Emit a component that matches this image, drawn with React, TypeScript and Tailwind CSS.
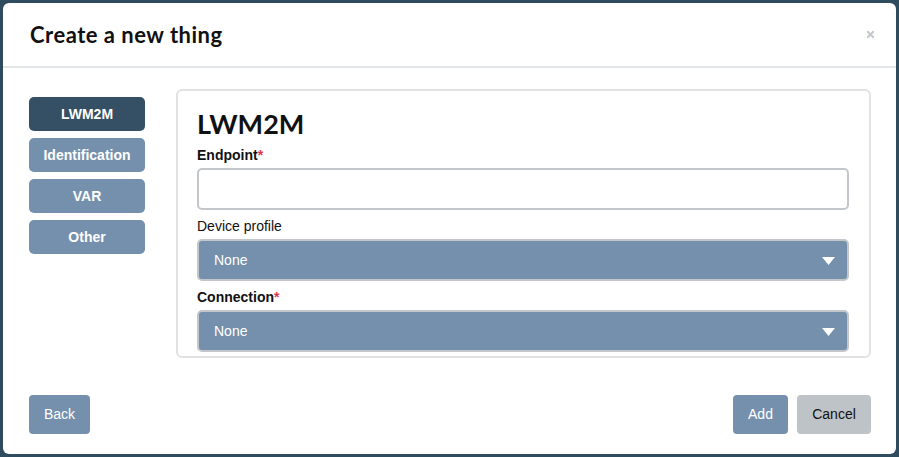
import { X } from 'lucide-react';

const tabs = ['LWM2M', 'Identification', 'VAR', 'Other'];

function Label({ text, required, bold }: { text: string; required?: boolean; bold?: boolean }) {
  return (
    <div className={`text-[14px] leading-[18px] text-[#111] mb-[4px] ${bold ? 'font-bold' : ''}`}>
      {text}
      {required && <span className="text-[#e0334a]">*</span>}
    </div>
  );
}

function Select() {
  return (
    <div className="h-[42px] rounded-[5px] border-2 border-[#c3c7cb] bg-[#7590ad] flex items-center justify-between pl-[15px] pr-[12px] text-white text-[14px]">
      <span>None</span>
      <svg width="13" height="9" viewBox="0 0 13 9">
        <path d="M0 1 L13 1 L6.5 9 Z" fill="white" />
      </svg>
    </div>
  );
}

export default function App() {
  return (
    <div className="w-[899px] h-[457px] bg-[#2f4b5e] p-[3px]" style={{ fontFamily: '"Liberation Sans", Arial, sans-serif' }}>
      <div className="w-full h-full bg-white rounded-[6px] flex flex-col">
        <div className="h-[65px] border-b-2 border-[#e3e6e9] flex items-center justify-between pl-[27px] pr-[20px]">
          <h1 className="text-[22px] font-bold text-[#111] tracking-[0.5px]" style={{ fontFamily: 'Lato, sans-serif' }}>
            Create a new thing
          </h1>
          <X className="w-[11px] h-[11px] text-[#c3c7cb]" strokeWidth={4} />
        </div>
        <div className="flex pl-[26px] pr-[25px] pt-[21px] gap-[31px]">
          <div className="w-[116px] flex flex-col gap-[7px] pt-[8px]">
            {tabs.map((t, i) => (
              <div
                key={t}
                className={`h-[34px] rounded-[5px] flex items-center justify-center text-white text-[14px] font-bold ${i === 0 ? 'bg-[#354f64]' : 'bg-[#7590ad]'}`}
              >
                {t}
              </div>
            ))}
          </div>
          <div className="flex-1 h-[269px] border-2 border-[#e2e2e2] rounded-[6px] pl-[19px] pr-[20px] pt-[16px]">
            <h2 className="text-[27px] font-bold leading-[34px] text-[#111] mb-[5px]" style={{ fontFamily: 'Lato, sans-serif' }}>
              LWM2M
            </h2>
            <Label text="Endpoint" required bold />
            <div className="h-[42px] rounded-[5px] border-2 border-[#c3c7cb] bg-white mb-[7px]" />
            <Label text="Device profile" />
            <Select />
            <div className="h-[7px]" />
            <Label text="Connection" required bold />
            <Select />
          </div>
        </div>
        <div className="mt-auto flex items-center justify-between pl-[26px] pr-[25px] pb-[20px]">
          <button className="h-[39px] w-[61px] rounded-[4px] bg-[#7590ad] text-white text-[14px]">Back</button>
          <div className="flex gap-[9px]">
            <button className="h-[39px] w-[55px] rounded-[4px] bg-[#7590ad] text-white text-[14px]">Add</button>
            <button className="h-[39px] w-[74px] rounded-[4px] bg-[#bec3c7] text-[#111] text-[14px]">Cancel</button>
          </div>
        </div>
      </div>
    </div>
  );
}
